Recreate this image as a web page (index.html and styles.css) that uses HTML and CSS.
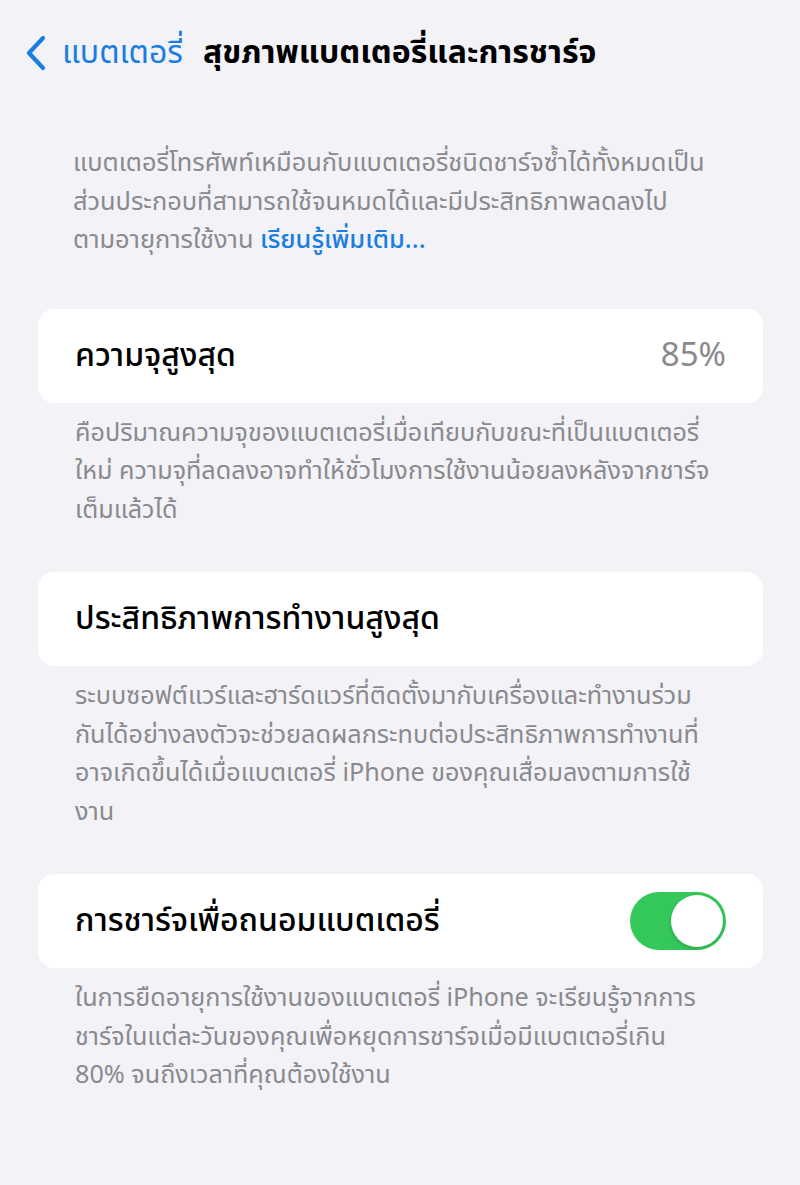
FILE: index.html
```html
<!DOCTYPE html>
<html lang="th">
<head>
    <meta charset="UTF-8">
    <meta name="viewport" content="width=device-width, initial-scale=1.0">
    <title>สุขภาพแบตเตอรี่และการชาร์จ</title>
    <link rel="stylesheet" href="styles.css">
</head>
<body>
    <div class="container">
        <header class="nav-bar">
            <a class="back-link" href="#">
                <svg class="chevron" width="22" height="36" viewBox="0 0 22 36">
                    <path d="M18 3 L4 18 L18 33" fill="none" stroke="currentColor" stroke-width="4.2" stroke-linecap="round" stroke-linejoin="round"/>
                </svg>
                <span>แบตเตอรี่</span>
            </a>
            <h1>สุขภาพแบตเตอรี่และการชาร์จ</h1>
        </header>

        <main>
            <p class="intro">
                แบตเตอรี่โทรศัพท์เหมือนกับแบตเตอรี่ชนิดชาร์จซ้ำได้ทั้งหมดเป็น<br>
                ส่วนประกอบที่สามารถใช้จนหมดได้และมีประสิทธิภาพลดลงไป<br>
                ตามอายุการใช้งาน <a href="#" class="more-link">เรียนรู้เพิ่มเติม...</a>
            </p>

            <section class="group">
                <div class="card">
                    <span class="card-label">ความจุสูงสุด</span>
                    <span class="card-value">85%</span>
                </div>
                <p class="footnote">
                    คือปริมาณความจุของแบตเตอรี่เมื่อเทียบกับขณะที่เป็นแบตเตอรี่<br>
                    ใหม่ ความจุที่ลดลงอาจทำให้ชั่วโมงการใช้งานน้อยลงหลังจากชาร์จ<br>
                    เต็มแล้วได้
                </p>
            </section>

            <section class="group">
                <div class="card">
                    <span class="card-label">ประสิทธิภาพการทำงานสูงสุด</span>
                </div>
                <p class="footnote">
                    ระบบซอฟต์แวร์และฮาร์ดแวร์ที่ติดตั้งมากับเครื่องและทำงานร่วม<br>
                    กันได้อย่างลงตัวจะช่วยลดผลกระทบต่อประสิทธิภาพการทำงานที่<br>
                    อาจเกิดขึ้นได้เมื่อแบตเตอรี่ iPhone ของคุณเสื่อมลงตามการใช้<br>
                    งาน
                </p>
            </section>

            <section class="group">
                <div class="card">
                    <span class="card-label">การชาร์จเพื่อถนอมแบตเตอรี่</span>
                    <span class="toggle on"><span class="knob"></span></span>
                </div>
                <p class="footnote">
                    ในการยืดอายุการใช้งานของแบตเตอรี่ iPhone จะเรียนรู้จากการ<br>
                    ชาร์จในแต่ละวันของคุณเพื่อหยุดการชาร์จเมื่อมีแบตเตอรี่เกิน<br>
                    80% จนถึงเวลาที่คุณต้องใช้งาน
                </p>
            </section>
        </main>
    </div>
</body>
</html>
```

FILE: styles.css
```css
:root {
    --bg-color: #f2f2f7;
    --card-color: #ffffff;
    --text-color: #000000;
    --light-text: #8a8a8e;
    --link-color: #1a7ee0;
    --green: #34c759;
}

* {
    margin: 0;
    padding: 0;
    box-sizing: border-box;
    font-family: 'Noto Sans Thai', 'Noto Sans', 'Liberation Sans', sans-serif;
}

body {
    background-color: var(--bg-color);
    color: var(--text-color);
    width: 800px;
    height: 1185px;
    overflow: hidden;
}

.container {
    padding: 0 37px 0 38px;
}

/* ナビゲーション */
.nav-bar {
    display: flex;
    align-items: center;
    height: 106px;
    margin-left: -13px;
}

.back-link {
    display: flex;
    align-items: center;
    gap: 15px;
    color: var(--link-color);
    text-decoration: none;
    font-size: 32px;
    margin-right: 20px;
}

.chevron {
    display: block;
}

h1 {
    font-size: 32px;
    font-weight: bold;
}

/* 説明文 */
.intro {
    padding: 38px 20px 0 35px;
    font-size: 25.4px;
    line-height: 38.5px;
    color: var(--light-text);
    margin-bottom: 49px;
    white-space: nowrap;
}

.more-link {
    color: var(--link-color);
    text-decoration: none;
    font-weight: 500;
}

.group {
    margin-bottom: 43px;
}

/* カード */
.card {
    display: flex;
    justify-content: space-between;
    align-items: center;
    height: 94px;
    padding: 0 37px;
    background-color: var(--card-color);
    border-radius: 16px;
}

.card-label {
    font-size: 32px;
    font-weight: 500;
}

.card-value {
    font-size: 33px;
    color: var(--light-text);
}

.footnote {
    padding: 11px 20px 0 37px;
    font-size: 25.2px;
    line-height: 38.5px;
    color: var(--light-text);
    white-space: nowrap;
}

/* トグル */
.toggle {
    width: 96px;
    height: 58px;
    border-radius: 29px;
    background-color: var(--green);
    padding: 3px;
    display: flex;
    justify-content: flex-end;
}

.knob {
    width: 52px;
    height: 52px;
    border-radius: 50%;
    background-color: #fff;
    box-shadow: 0 2px 4px rgba(0,0,0,0.15);
}
```
